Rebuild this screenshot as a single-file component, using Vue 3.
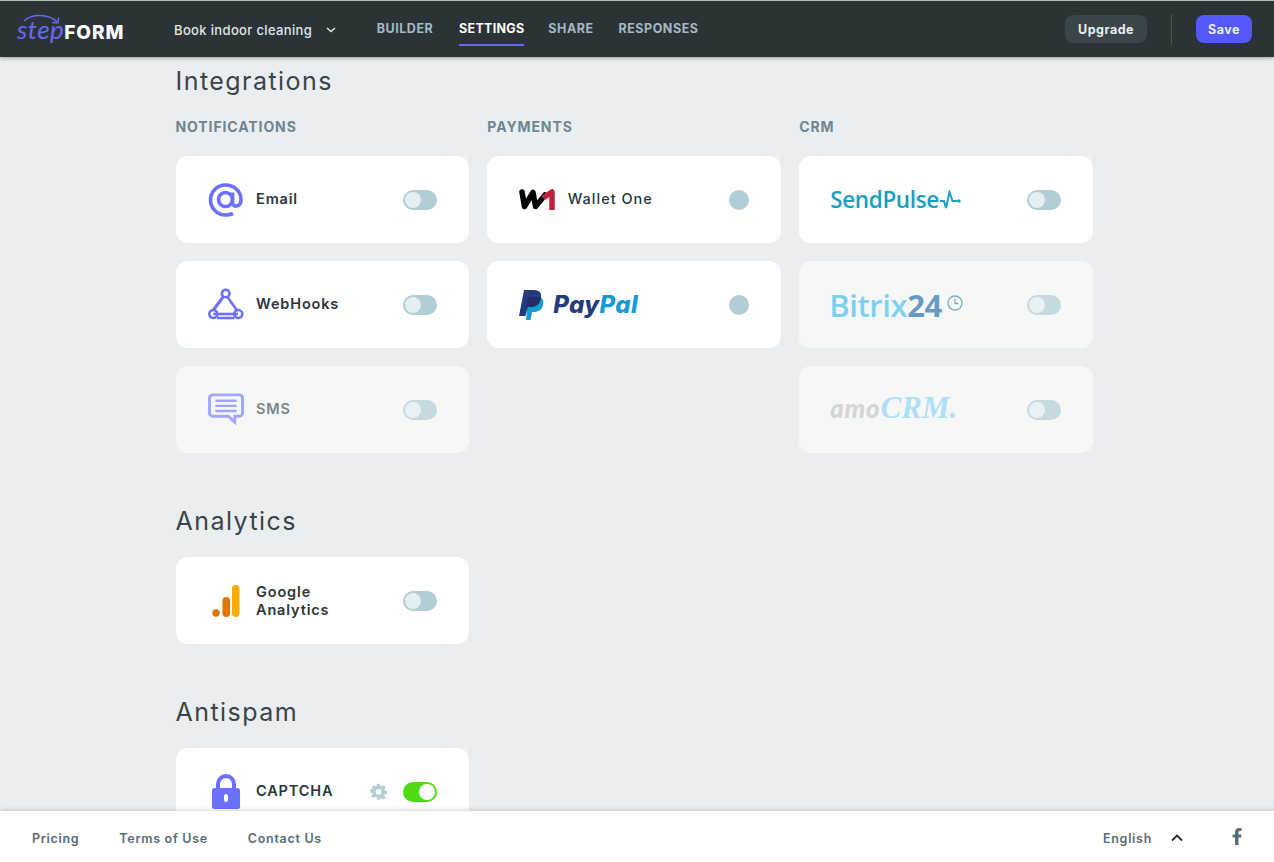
<script setup>
const notifications = [
  { name: 'Email', icon: 'at' },
  { name: 'WebHooks', icon: 'hook' },
  { name: 'SMS', icon: 'sms', off: true },
]
</script>

<template>
  <div class="page">
    <header class="top">
      <div class="logo"><span class="step">step</span><span class="form">FORM</span>
        <svg class="arc" width="38" height="12" viewBox="0 0 38 12" fill="none" stroke="#6468f7" stroke-width="1.5">
          <path d="M1 7C8 0 25 -1 34 8" />
          <path d="M29 8.500 35 9 35.500 3.500" />
        </svg>
      </div>
      <div class="project">
        <span>Book indoor cleaning</span>
        <svg width="10" height="6" viewBox="0 0 10 6" fill="none" stroke="#dfe6ea" stroke-width="1.6"><path d="M1 1l4 3.500L9 1" /></svg>
      </div>
      <nav class="nav">
        <a>BUILDER</a>
        <a class="active">SETTINGS</a>
        <a>SHARE</a>
        <a>RESPONSES</a>
      </nav>
      <div class="actions">
        <button class="upgrade">Upgrade</button>
        <i class="divider"></i>
        <button class="save">Save</button>
      </div>
    </header>

    <main class="main">
      <h2 class="h first">Integrations</h2>
      <div class="grid heads">
        <h3>NOTIFICATIONS</h3>
        <h3>PAYMENTS</h3>
        <h3>CRM</h3>
      </div>
      <div class="grid">
        <div class="col">
          <div v-for="n in notifications" :key="n.name" class="card" :class="{ off: n.off }">
            <div class="content">
              <div class="ico">
                <svg v-if="n.icon === 'at'" width="36" height="34" viewBox="0 0 36 34" fill="none" stroke="#6b70ff" stroke-width="3.600">
                  <circle cx="17.500" cy="16.500" r="7" />
                  <path d="M24.500 9.500v10c0 5.500 8.500 5 8.500-3C33 8 26 2 17.500 2 9 2 2.500 9 2.500 17s6.500 15 15 15c3.500 0 5.500-.6 7.500-1.500" />
                </svg>
                <svg v-else-if="n.icon === 'hook'" width="36" height="36" viewBox="0 0 36 36" fill="none" stroke="#6b70ff" stroke-width="2.600">
                  <circle cx="17.700" cy="6.500" r="3.800" />
                  <circle cx="5.300" cy="27" r="4" />
                  <circle cx="30.300" cy="27" r="4" />
                  <path d="M15.500 9.500 5.300 23" stroke-width="3" />
                  <path d="M19.500 10 29 23.500" />
                  <path d="M5.300 27H30" />
                  <path d="M9 31h17.500" />
                </svg>
                <svg v-else width="37" height="33" viewBox="0 0 37 33" fill="none" stroke="#6b70ff" stroke-width="3">
                  <path d="M5 1.500h27a3.500 3.500 0 0 1 3.500 3.500v15a3.500 3.500 0 0 1-3.500 3.500h-4.500v6l-6.500-6H5A3.500 3.500 0 0 1 1.500 20V5A3.500 3.500 0 0 1 5 1.500Z" />
                  <path d="M7.500 7.500h22M7.500 12.800h22M7.500 18h22" stroke-width="2.500" />
                </svg>
              </div>
              <span class="label">{{ n.name }}</span>
            </div>
            <div class="toggle"><i></i></div>
          </div>
        </div>

        <div class="col">
          <div class="card">
            <div class="content">
              <div class="ico wide">
                <svg width="36" height="21" viewBox="0 0 36 21" fill="none" stroke-width="5.500" stroke-linejoin="round">
                  <path d="M3 3 5.500 17.500 14 3.500 16.500 17.500 26 6" stroke="#000" stroke-linecap="round" />
                  <path d="M24 9 33 3V21" stroke="#c11f3e" />
                </svg>
              </div>
              <span class="label wallet">Wallet One</span>
            </div>
            <div class="dot"></div>
          </div>
          <div class="card">
            <div class="content">
              <svg class="pp" width="25" height="30" viewBox="0 0 25 30">
                <path d="M9 7h11c4 1 5 4 4 8-1 5-5 7-9 7h-2l-1.500 8H7Z" fill="#179bd7" />
                <path d="M5 0h10c6 0 8 4 7 8-1 6-5 9-10 9H8.500L6.500 26H0Z" fill="#253b80" />
                <path d="M9 7h13c0 .3 0 .700-.1 1-1 6-5 9-10 9H8.500L7.200 22Z" fill="#222d65" />
              </svg>
              <span class="paypal"><b>Pay</b><em>Pal</em></span>
            </div>
            <div class="dot"></div>
          </div>
        </div>

        <div class="col">
          <div class="card">
            <div class="content logo-box">
              <span class="sendpulse">SendPulse</span>
              <svg width="21" height="20" viewBox="0 0 21 20" fill="none" stroke="#1a9fc0" stroke-width="2">
                <path d="M0 11h4l2 7L9.500 2l3 9h5" />
                <circle cx="19" cy="11" r="1.700" fill="#1a9fc0" stroke="none" />
              </svg>
            </div>
            <div class="toggle"><i></i></div>
          </div>
          <div class="card off">
            <div class="content logo-box">
              <span class="bitrix">Bitrix<b>24</b></span>
              <svg class="clock" width="16" height="16" viewBox="0 0 16 16" fill="none" stroke="#2f7dae" stroke-width="1.300">
                <circle cx="8" cy="8" r="7" />
                <path d="M8 3.500V8.500h3.500" />
              </svg>
            </div>
            <div class="toggle"><i></i></div>
          </div>
          <div class="card off">
            <div class="content logo-box">
              <span class="amo"><i>amo</i><b>CRM.</b></span>
            </div>
            <div class="toggle"><i></i></div>
          </div>
        </div>
      </div>

      <h2 class="h">Analytics</h2>
      <div class="grid">
        <div class="card">
          <div class="content">
            <div class="ico">
              <svg width="28" height="32" viewBox="0 0 28 32">
                <circle cx="4" cy="28" r="3.700" fill="#e37400" />
                <rect x="10.500" y="12" width="7.500" height="20" rx="3.700" fill="#e37400" />
                <rect x="20" y="0" width="7.500" height="32" rx="3.700" fill="#f9ab00" />
              </svg>
            </div>
            <span class="label two">Google<br />Analytics</span>
          </div>
          <div class="toggle"><i></i></div>
        </div>
      </div>

      <h2 class="h">Antispam</h2>
      <div class="grid">
        <div class="card">
          <div class="content">
            <div class="ico">
              <svg width="28" height="35" viewBox="0 0 28 35">
                <path d="M6 16V10a8 8 0 0 1 16 0v6" fill="none" stroke="#6b70ff" stroke-width="4" />
                <rect x="0" y="14" width="28" height="21" rx="2.500" fill="#6b70ff" />
                <rect x="12" y="20" width="4" height="8" rx="2" fill="#fff" />
              </svg>
            </div>
            <span class="label">CAPTCHA</span>
          </div>
          <div class="right">
            <svg width="17" height="17" viewBox="0 0 24 24" fill="#b3cdd7">
              <path d="M10 1h4l.6 3.200 2 .8 2.700-1.800 2.800 2.800-1.900 2.700.9 2 3.200.6v4l-3.200.6-.9 2 1.900 2.700-2.800 2.800-2.700-1.900-2 .9L14 23.500h-4l-.6-3.200-2-.9-2.700 1.900-2.800-2.800 1.900-2.700-.9-2-3.200-.6v-4l3.200-.6.900-2L1.900 6l2.800-2.800 2.700 1.800 2-.8ZM12 8.300a4 4 0 1 0 0 8 4 4 0 0 0 0-8Z" />
            </svg>
            <div class="toggle on"><i></i></div>
          </div>
        </div>
      </div>
    </main>

    <footer class="foot">
      <a>Pricing</a>
      <a>Terms of Use</a>
      <a>Contact Us</a>
      <div class="foot-right">
        <span class="lang">English</span>
        <svg class="chev" width="12" height="8" viewBox="0 0 12 8" fill="none" stroke="#22292d" stroke-width="1.800"><path d="M1 6.500l5-5 5 5" /></svg>
        <svg class="fb" width="10" height="17" viewBox="0 0 10 17" fill="#566c78"><path d="M3 17V9.500H.5V6.500H3V4.500C3 1.500 4.500 0 7.200 0H9.500v3H8c-1.200 0-1.500.5-1.500 1.600v1.900h3l-.4 3H6.500V17Z" /></svg>
      </div>
    </footer>
  </div>
</template>

<style>
html, body { margin: 0; height: 100%; overflow: hidden; background: #ebeef1; }
</style>

<style scoped>
.page {
  height: 862px;
  display: flex;
  flex-direction: column;
  overflow: hidden;
  font-family: Inter, "Noto Sans", sans-serif;
  color: #2d3539;
  background: #ebeef1;
}
.top {
  position: relative;
  z-index: 2;
  height: 56px;
  flex: none;
  display: flex;
  align-items: center;
  background: #2b3337;
  border-top: 1px solid #b5b9bb;
  box-shadow: 0 1px 4px rgba(0, 0, 0, .35);
}
.logo {
  position: relative;
  width: 157px;
  margin-left: 17px;
  line-height: 26px;
  padding-top: 3px;
  white-space: nowrap;
}
.step { font-family: Lato, sans-serif; font-style: italic; font-weight: 400; color: #6468f7; font-size: 26px; letter-spacing: .4px; }
.form { font-family: Inter, sans-serif; font-weight: 800; color: #fff; font-size: 19px; letter-spacing: 1px; }
.arc { position: absolute; left: 6px; top: 1px; }
.project {
  width: 201px;
  display: flex;
  align-items: center;
  gap: 14px;
  margin-top: 2px;
  color: #e0e6ea;
  font-size: 13px;
  font-weight: 500;
  letter-spacing: .35px;
}
.nav {
  display: grid;
  grid-template-columns: 60px 65px 46px 81px;
  column-gap: 24px;
  align-self: stretch;
  align-items: center;
}
.nav a {
  position: relative;
  font-size: 12.500px;
  font-weight: 700;
  letter-spacing: .55px;
  color: #a3bac6;
  padding-bottom: 2px;
  text-align: center;
  white-space: nowrap;
}
.nav a.active { color: #fff; letter-spacing: .3px; }
.nav a.active::after {
  content: "";
  position: absolute;
  left: 0;
  right: 0;
  bottom: -8px;
  height: 2px;
  background: #6468f7;
}
.actions { margin-left: auto; margin-right: 22px; display: flex; align-items: center; }
.actions button {
  height: 28px;
  border: 0;
  border-radius: 8px;
  font-family: inherit;
  font-size: 12.500px;
  font-weight: 700;
  letter-spacing: .5px;
  color: #e9eef1;
  padding: 0;
}
.upgrade { width: 82px; background: #3a4649; }
.save { width: 56px; background: #5558ff; }
.divider { width: 1px; height: 31px; margin: 0 24px; background: #4a5659; }

.main { flex: 1; min-height: 0; overflow: hidden; padding: 9px 0 0 175.500px; box-sizing: border-box; }
.h {
  margin: 53px 0 0;
  font-size: 25px;
  line-height: 30px;
  font-weight: 400;
  letter-spacing: 1.450px;
  color: #3a4448;
}
.h.first { margin-top: 0; }
.grid {
  width: 917.500px;
  display: grid;
  grid-template-columns: repeat(3, 1fr);
  gap: 18px;
  margin-top: 21px;
}
.heads { margin-top: 22px; margin-bottom: -1px; }
.heads h3 {
  margin: 0;
  font-size: 14px;
  line-height: 18px;
  font-weight: 700;
  letter-spacing: .9px;
  color: #6e8591;
}
.col { display: flex; flex-direction: column; gap: 18px; }
.card {
  height: 87px;
  box-sizing: border-box;
  padding: 0 32px;
  background: #fff;
  border-radius: 12px;
  display: flex;
  align-items: center;
  justify-content: space-between;
}
.card.off { background: #f6f8f8; }
.card.off .content { opacity: .6; }
.card.off .toggle { opacity: .7; }
.content { display: flex; align-items: center; min-width: 0; }
.ico { width: 36px; margin-right: 12.500px; display: flex; justify-content: center; align-items: center; flex: none; }
.ico.wide { margin-right: 12.500px; }
.label { font-size: 14.500px; line-height: 18px; font-weight: 600; letter-spacing: .85px; color: #2d3539; margin-top: -2px; }
.label.two { margin-top: 0; }
.wallet { font-weight: 500; letter-spacing: 1px; }
.toggle {
  width: 34px;
  height: 20px;
  flex: none;
  box-sizing: border-box;
  padding: 2px;
  border-radius: 10px;
  background: #b3cdd7;
}
.toggle i { display: block; width: 16px; height: 16px; border-radius: 50%; background: #e3eff2; }
.toggle.on { background: #4fdb14; display: flex; justify-content: flex-end; }
.toggle.on i { background: #fff; }
.dot { width: 20px; height: 20px; border-radius: 50%; background: #b3cdd7; }
.right { display: flex; align-items: center; gap: 16px; }
.pp { margin-right: 9px; }
.paypal { font-family: Inter, sans-serif; font-style: italic; font-weight: 800; font-size: 24px; letter-spacing: .35px; }
.paypal b { color: #253b80; font-weight: 800; }
.paypal em { color: #179bd7; }
.logo-box { gap: 1px; }
.sendpulse { font-family: "Open Sans", sans-serif; font-weight: 600; font-size: 22.500px; letter-spacing: -.35px; color: #1a9fc0; line-height: 28px; margin-left: -1px; }
.bitrix { font-family: "Open Sans", sans-serif; font-weight: 600; font-size: 31px; color: #2fb6ee; line-height: 34px; letter-spacing: -.4px; margin-left: -2px; }
.bitrix b { color: #0a5fa0; font-weight: 700; }
.clock { margin-left: 4px; margin-top: -4px; }
.amo { line-height: 32px; white-space: nowrap; margin-left: -1px; }
.amo i { font-family: Lato, sans-serif; font-size: 26px; font-style: italic; font-weight: 900; letter-spacing: .8px; color: #bdbfc1; }
.amo b { font-family: "Liberation Serif", serif; font-size: 31px; font-style: italic; font-weight: 700; color: #7fd0f7; }

.foot {
  position: relative;
  z-index: 2;
  flex: none;
  height: 51px;
  box-sizing: border-box;
  padding: 4px 0 0 32px;
  display: flex;
  align-items: center;
  gap: 40px;
  background: #fff;
  box-shadow: 0 -1px 4px rgba(0, 0, 0, .18);
  font-size: 12.500px;
  font-weight: 600;
  letter-spacing: .7px;
  color: #5b6b75;
}
.foot-right { margin-left: auto; display: flex; align-items: center; margin-right: 32px; }
.lang { margin-right: 19px; }
.chev { margin-top: -2px; }
.fb { margin-left: 49px; margin-top: -4px; }
</style>
